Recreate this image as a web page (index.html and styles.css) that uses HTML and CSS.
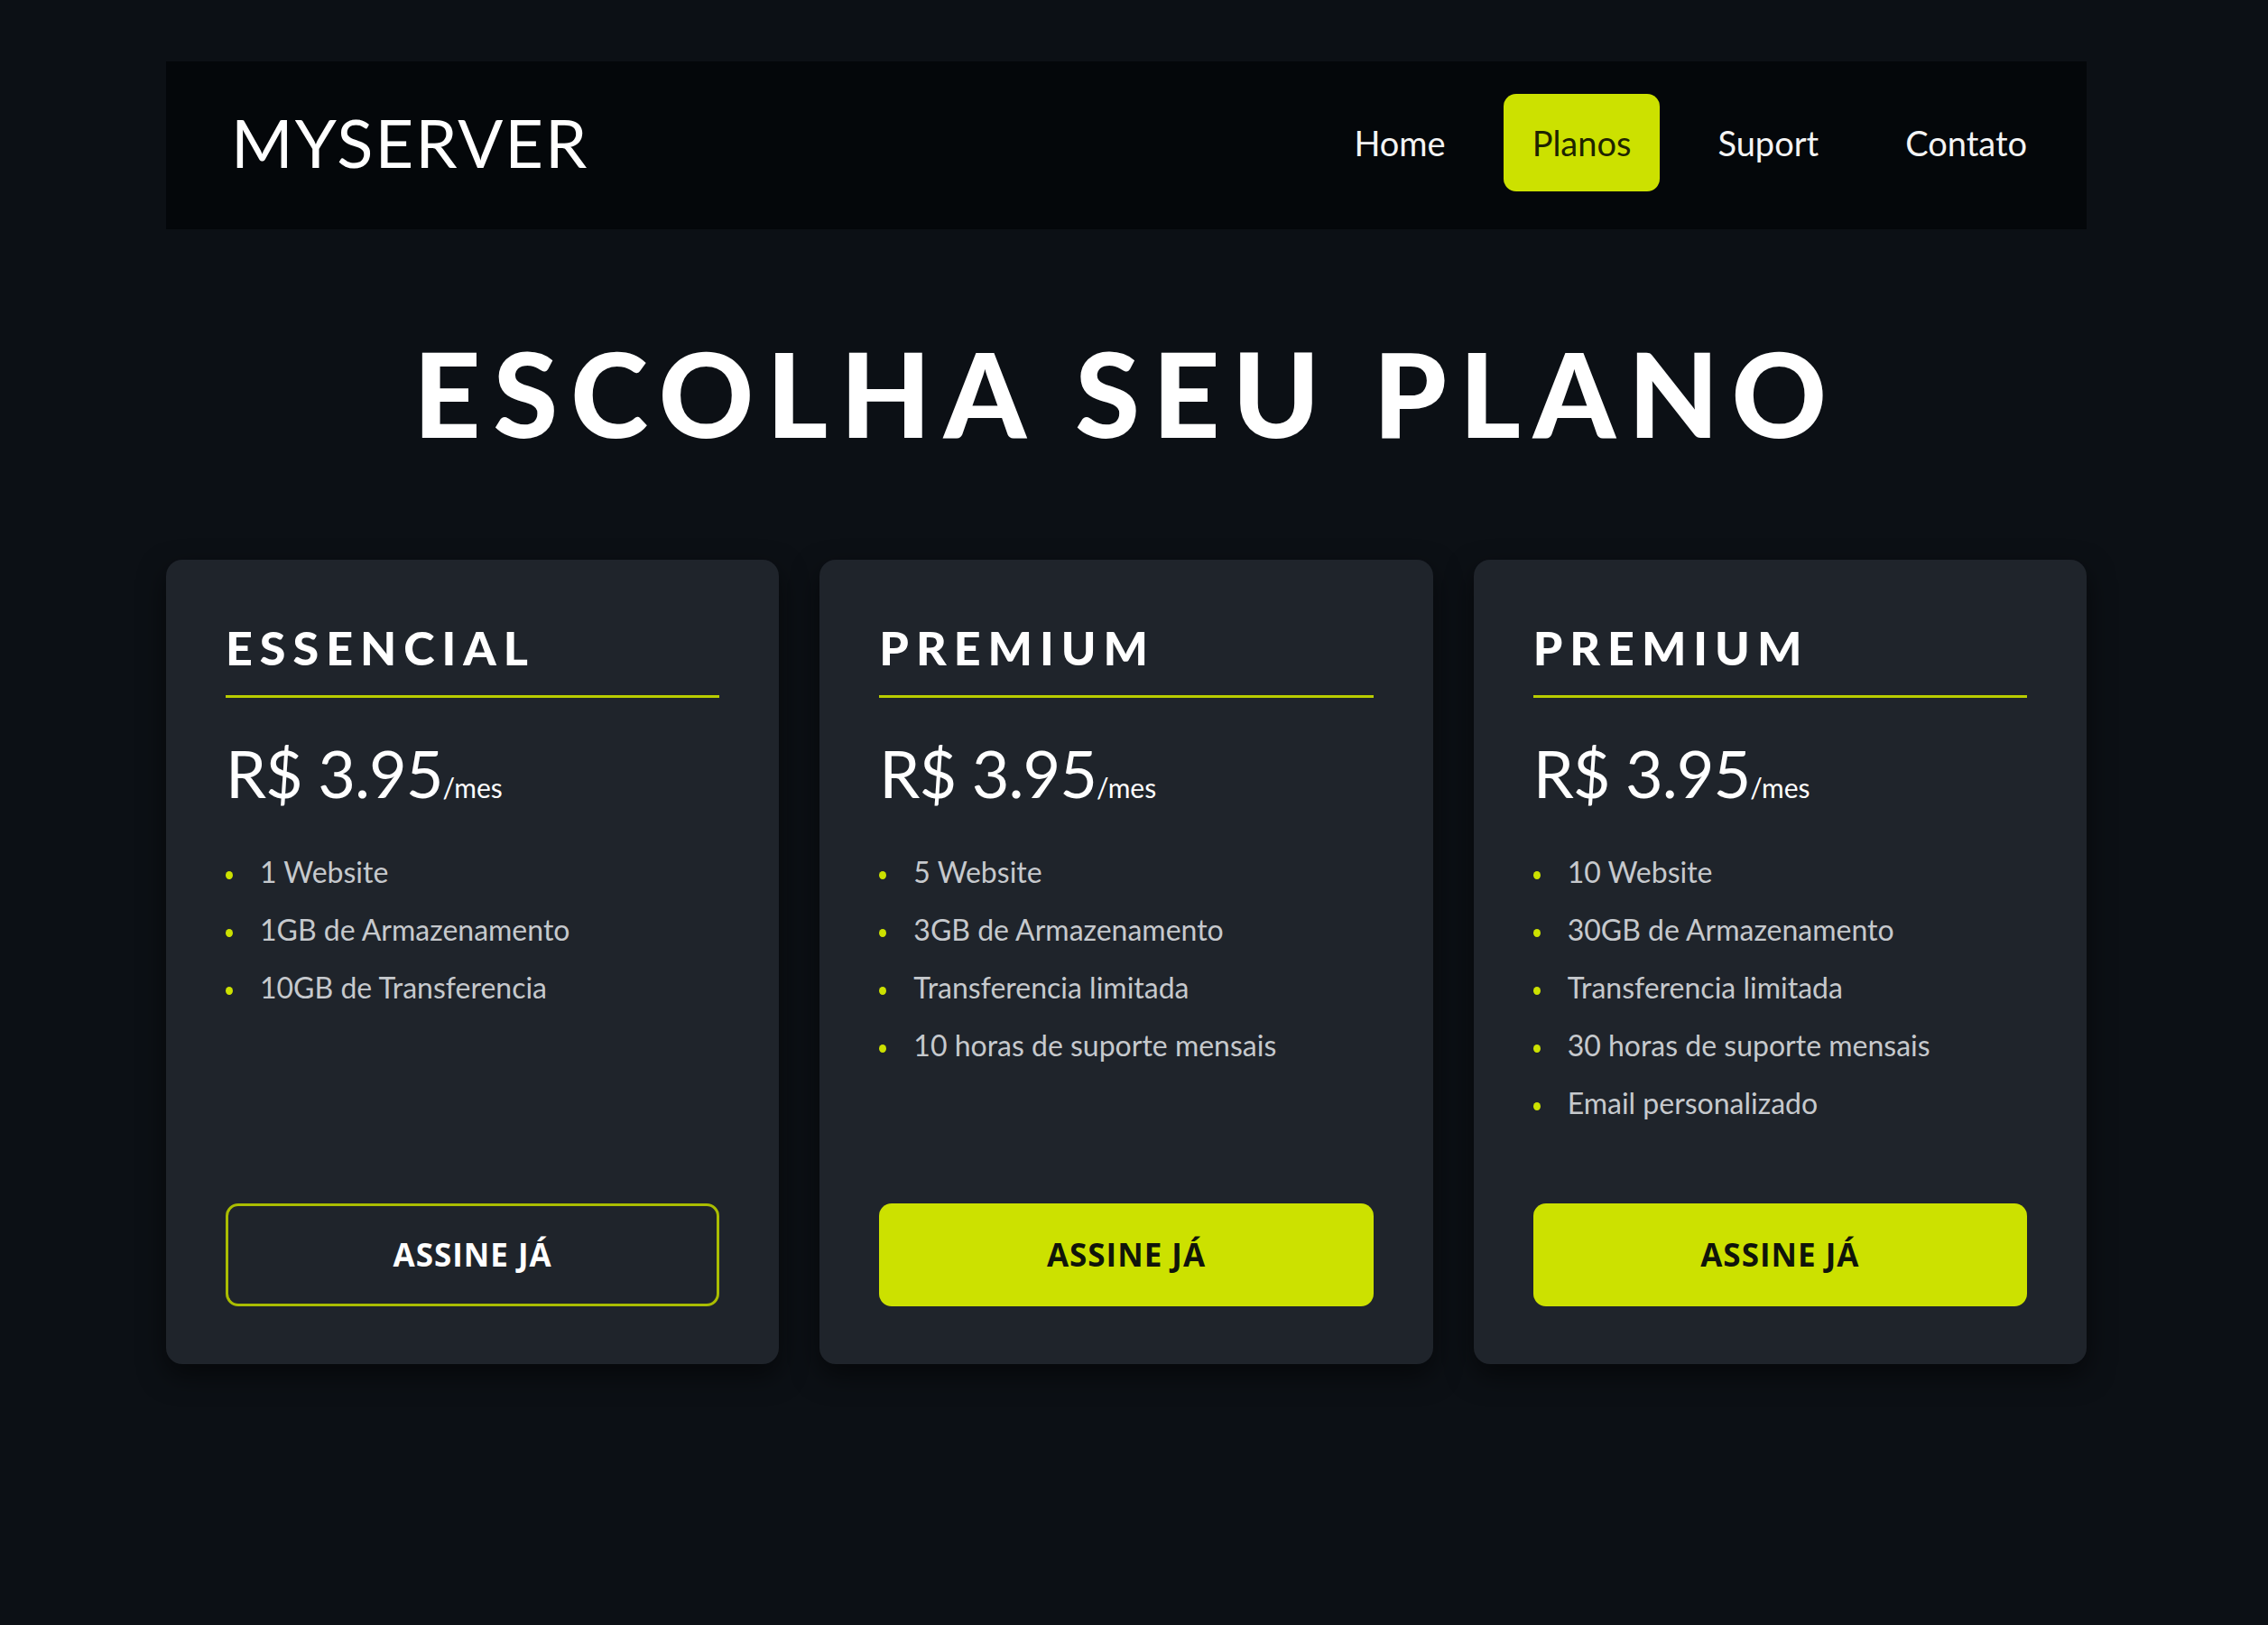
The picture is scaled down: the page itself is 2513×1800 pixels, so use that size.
FILE: index.html
```html
<!DOCTYPE html>
<html lang="pt-BR">
<head>
<meta charset="utf-8">
<title>MyServer - Planos</title>
<link rel="stylesheet" href="styles.css">
</head>
<body>
<div class="page">
  <header class="nav">
    <div class="logo">MYSERVER</div>
    <nav class="nav-links">
      <a class="nav-link" href="#">Home</a>
      <a class="nav-link active" href="#">Planos</a>
      <a class="nav-link" href="#">Suport</a>
      <a class="nav-link" href="#">Contato</a>
    </nav>
  </header>

  <h1 class="title">ESCOLHA SEU PLANO</h1>

  <section class="plans">
    <article class="card">
      <h2 class="card-title">ESSENCIAL</h2>
      <div class="price">R$ 3.95<span class="per">/mes</span></div>
      <ul class="features">
        <li>1 Website</li>
        <li>1GB de Armazenamento</li>
        <li>10GB de Transferencia</li>
      </ul>
      <a class="btn btn-outline" href="#">ASSINE JÁ</a>
    </article>

    <article class="card">
      <h2 class="card-title">PREMIUM</h2>
      <div class="price">R$ 3.95<span class="per">/mes</span></div>
      <ul class="features">
        <li>5 Website</li>
        <li>3GB de Armazenamento</li>
        <li>Transferencia limitada</li>
        <li>10 horas de suporte mensais</li>
      </ul>
      <a class="btn btn-fill" href="#">ASSINE JÁ</a>
    </article>

    <article class="card">
      <h2 class="card-title">PREMIUM</h2>
      <div class="price">R$ 3.95<span class="per">/mes</span></div>
      <ul class="features">
        <li>10 Website</li>
        <li>30GB de Armazenamento</li>
        <li>Transferencia limitada</li>
        <li>30 horas de suporte mensais</li>
        <li>Email personalizado</li>
      </ul>
      <a class="btn btn-fill" href="#">ASSINE JÁ</a>
    </article>
  </section>
</div>
</body>
</html>
```

FILE: styles.css
```css
* { box-sizing: border-box; }

html, body {
  margin: 0;
  background: #0c1015;
  color: #ffffff;
  font-family: "Lato", "Open Sans", sans-serif;
}

body { min-height: 1800px; }

.page {
  width: 2128px;
  margin-left: 184px;
  padding-top: 68px;
}

.nav {
  height: 186px;
  background: #04070a;
  display: flex;
  align-items: center;
  justify-content: space-between;
  padding: 0 34px 6px 72px;
}

.logo {
  font-size: 74px;
  font-weight: 400;
  letter-spacing: 2px;
  color: #ffffff;
  line-height: 1;
}

.nav-links {
  display: flex;
  gap: 32px;
  align-items: center;
}

.nav-link {
  display: block;
  height: 108px;
  line-height: 108px;
  padding: 0 32px;
  border-radius: 14px;
  color: #f4f4f4;
  text-decoration: none;
  font-size: 38px;
}

.nav-link.active {
  background: #cce100;
  color: #1e2400;
}

.title {
  margin: 103px 0 107px;
  text-align: center;
  font-size: 130px;
  line-height: 1.2;
  font-weight: 900;
  letter-spacing: 14px;
  color: #ffffff;
}

.plans {
  display: grid;
  grid-template-columns: repeat(3, 1fr);
  gap: 45px;
}

.card {
  background: #1f242b;
  border-radius: 18px;
  padding: 66px 66px 64px;
  display: flex;
  flex-direction: column;
  box-shadow: 0 12px 30px rgba(0, 0, 0, 0.55);
}

.card-title {
  margin: 0;
  font-size: 52px;
  line-height: 1.2;
  font-weight: 900;
  letter-spacing: 8px;
  padding-bottom: 22px;
  border-bottom: 3px solid #b8cc00;
}

.price {
  margin-top: 40px;
  font-size: 72px;
  line-height: 1.2;
  font-weight: 400;
  letter-spacing: -1px;
  color: #ffffff;
}

.per {
  font-size: 30px;
  letter-spacing: 0;
}

.features {
  list-style: none;
  margin: 34px 0 0;
  padding: 0;
}

.features li {
  position: relative;
  font-size: 32px;
  line-height: 64px;
  color: #c6c9cd;
  padding-left: 38px;
}

.features li::before {
  content: "";
  position: absolute;
  left: 0;
  top: 31px;
  width: 8px;
  height: 9px;
  border-radius: 50%;
  background: #cce100;
}

.btn {
  margin-top: auto;
  height: 114px;
  border-radius: 14px;
  display: flex;
  align-items: center;
  justify-content: center;
  text-decoration: none;
  font-family: "Open Sans", "Lato", sans-serif;
  font-weight: 700;
  font-size: 35px;
  letter-spacing: 1px;
}

.btn-outline {
  border: 3px solid #aabd00;
  color: #ffffff;
}

.btn-fill {
  background: #cce100;
  color: #10140a;
}

.card:last-child .btn { margin-top: 79px; }
```
